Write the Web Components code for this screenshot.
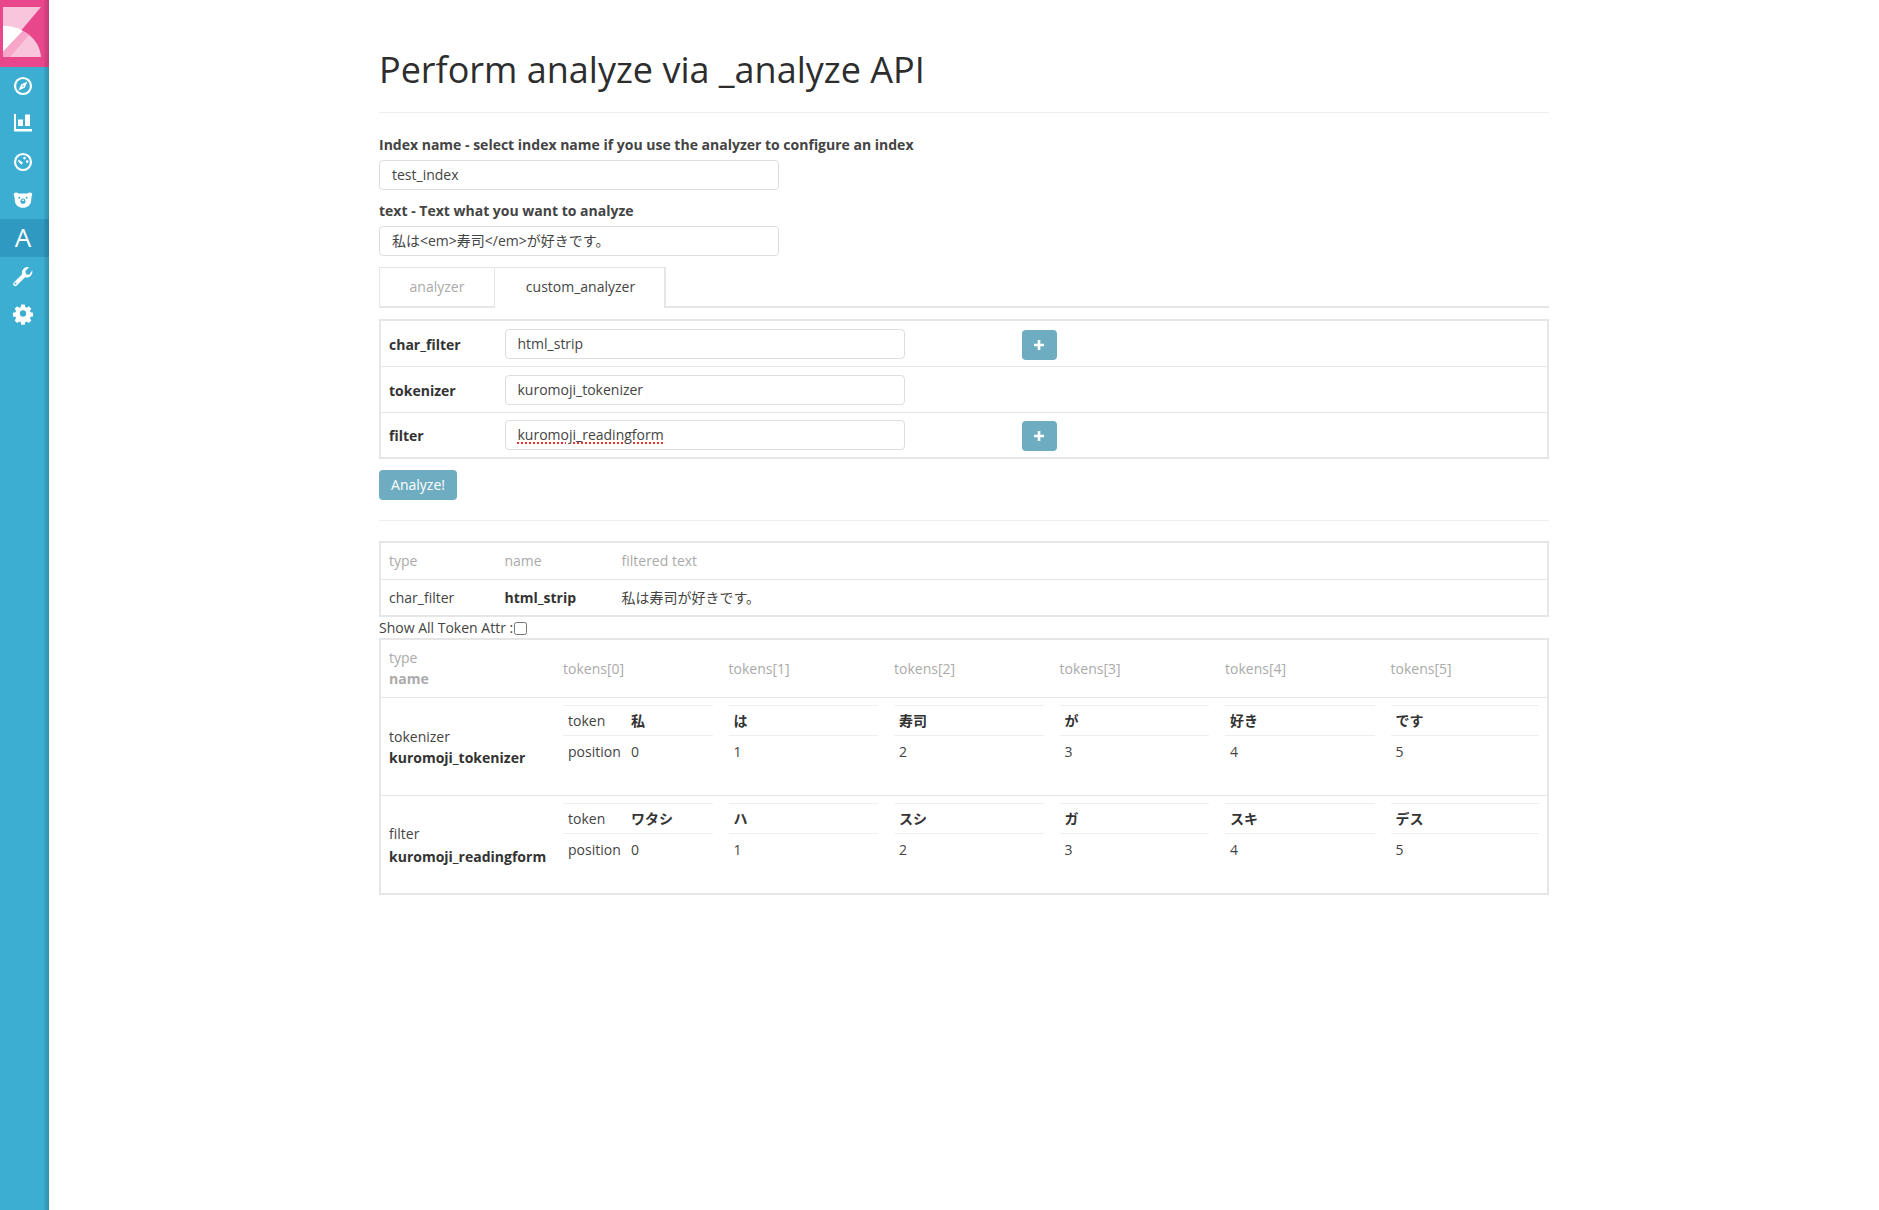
<!DOCTYPE html>
<html lang="ja">
<head>
<meta charset="utf-8">
<title>Perform analyze via _analyze API</title>
<style>
  html, body { margin: 0; height: 100%; }
  body { font: 14px/20px "Open Sans", "Noto Sans CJK JP", sans-serif; color: #444; background: #fff; }
</style>
</head>
<body>
<app-shell>
  <side-nav slot="nav"></side-nav>
  <page-header>Perform analyze via _analyze API</page-header>
  <text-field label="Index name - select index name if you use the analyzer to configure an index" value="test_index"></text-field>
  <text-field label="text - Text what you want to analyze" value="私は&lt;em&gt;寿司&lt;/em&gt;が好きです。"></text-field>
  <analyzer-tabs></analyzer-tabs>
  <analyzer-form></analyzer-form>
  <result-tables></result-tables>
</app-shell>

<script>
const FONT = '"Open Sans", "Noto Sans CJK JP", sans-serif';

class AppShell extends HTMLElement {
  connectedCallback() {
    this.attachShadow({ mode: 'open' });
    this.shadowRoot.innerHTML = `
      <style>
        :host { display: flex; min-height: 1210px; font-family: ${FONT}; }
        main { flex: 1; min-width: 0; }
        .container { width: 1170px; margin: 0 auto; }
      </style>
      <slot name="nav"></slot>
      <main><div class="container"><slot></slot></div></main>
    `;
  }
}
customElements.define('app-shell', AppShell);

const ICONS = [
  // compass
  `<circle cx="12" cy="12" r="8" fill="none" stroke="#fff" stroke-width="2.2"/><path d="M16.500 7.500l-2.800 6.200-6.200 2.800 2.800-6.200z" fill="#fff"/><circle cx="12" cy="12" r="1" fill="#9fd6e8"/>`,
  // bar chart
  `<path d="M3 2h2v15h16v2.500H3z" fill="#fff"/><path d="M7 7.500h5v6.500H7zM14 2.500h5V14h-5z" fill="#fff"/>`,
  // dashboard dial
  `<circle cx="12" cy="12" r="8" fill="none" stroke="#fff" stroke-width="2.200"/><path d="M7.500 9.500l4.500 3.300-1.600 1.900-3.400-3.400zM13.500 6.800a1.300 1.300 0 1 1 0 2.600 1.300 1.300 0 0 1 0-2.600zM16.200 10.300a1.300 1.300 0 1 1 0 2.600 1.300 1.300 0 0 1 0-2.600z" fill="#fff"/>`,
  // bear
  `<g transform="translate(0 .7)"><path d="M3.300 4.300c1.500-.9 3.200-.6 4.200.4h9c1-1 2.700-1.300 4.200-.4.700 1 .6 2.500-.2 3.700l-.4 4.500c-.3 2-1.400 4-3.400 5.300-1.400.9-3 1.200-4.700 1.200s-3.300-.3-4.700-1.200c-2-1.300-3.100-3.300-3.400-5.300L3.500 8c-.8-1.200-.9-2.700-.2-3.700z" fill="#fff"/><circle cx="8.300" cy="9" r="1" fill="#3caed2"/><circle cx="15.700" cy="9" r="1" fill="#3caed2"/><ellipse cx="12" cy="12.500" rx="2.500" ry="2.600" fill="#3caed2"/><ellipse cx="12" cy="11.600" rx="1.200" ry=".7" fill="#fff"/></g>`,
  null,
  // wrench
  `<path d="M21.200 6.200c.5 2.200-.1 4.300-1.700 5.800-1.500 1.400-3.500 1.800-5.400 1.200l-8.300 8.300c-.9.900-2.200.9-3 .1-.9-.9-.9-2.200 0-3.100l8.300-8.200c-.6-1.900-.1-3.900 1.300-5.400 1.500-1.500 3.600-2.100 5.600-1.700l-3.600 3.700.6 3.300 3.300.6zM4.500 18.500a1 1 0 1 0 0 2 1 1 0 0 0 0-2z" fill="#fff" fill-rule="evenodd"/>`,
  // gear
  `<path fill-rule="evenodd" d="M10 2h4l.5 2.800 1.700.7 2.300-1.600 2.800 2.800-1.600 2.300.7 1.700 2.800.5v4l-2.800.5-.7 1.700 1.600 2.300-2.800 2.800-2.300-1.600-1.700.7-.5 2.800h-4l-.5-2.800-1.700-.7-2.300 1.600-2.800-2.800 1.600-2.300-.7-1.700-2.800-.5v-4l2.800-.5.7-1.700-1.600-2.300 2.800-2.800 2.300 1.600 1.700-.7zM12 8.500a3.500 3.500 0 1 0 0 7 3.500 3.500 0 0 0 0-7z" fill="#fff" transform="translate(1.200 .7) scale(.9)"/>`,
];

class SideNav extends HTMLElement {
  connectedCallback() {
    this.attachShadow({ mode: 'open' });
    const items = ICONS.map((svg, i) => svg
      ? `<a class="item"><svg viewBox="0 0 24 24" width="24" height="24">${svg}</svg></a>`
      : `<a class="item active"><span>A</span></a>`).join('');
    this.shadowRoot.innerHTML = `
      <style>
        :host { display: block; width: 49px; flex: none; background: #3caed2; position: relative; }
        :host::after { content: ""; position: absolute; top: 0; right: 0; bottom: 0; width: 5px; background: linear-gradient(to right, rgba(0,0,0,.06), rgba(0,0,0,.16)); }
        .logo { height: 67px; background: #e8488b; display: flex; justify-content: center; }
        .logo svg { display: block; }
        nav { display: flex; flex-direction: column; }
        .item { height: 38px; display: flex; align-items: center; justify-content: center; color: #fff; font: 400 26px/1 "Open Sans", sans-serif; padding-right: 3px; }
        .item span { padding-bottom: 2px; }
        .active { background: #2f99c1; }
      </style>
      <div class="logo">
        <svg width="49" height="67" viewBox="0 0 49 67">
          <path d="M3 7h38L3 52z" fill="#f9c5dc"/>
          <path d="M3 26c9 0 16 2 20 5L3 52z" fill="#fff"/>
          <path d="M23 31c10 5 17 14 18 26H10z" fill="#f9c5dc"/>
          <path d="M23 31l6 4L10 57H3v-5z" fill="#f7a6c9"/>
        </svg>
      </div>
      <nav>${items}</nav>
    `;
  }
}
customElements.define('side-nav', SideNav);

class PageHeader extends HTMLElement {
  connectedCallback() {
    this.attachShadow({ mode: 'open' });
    this.shadowRoot.innerHTML = `
      <style>
        :host { display: block; padding-top: 46px; padding-bottom: 18px; margin-bottom: 22px; border-bottom: 1px solid #ecf0f1; }
        h1 { margin: 0; font: 400 36px/48px ${FONT}; color: #2d2d2d; }
      </style>
      <h1><slot></slot></h1>
    `;
  }
}
customElements.define('page-header', PageHeader);

class TextField extends HTMLElement {
  connectedCallback() {
    this.attachShadow({ mode: 'open' });
    this.shadowRoot.innerHTML = `
      <style>
        :host { display: block; margin-bottom: 11px; }
        label { display: block; font-weight: 700; line-height: 20px; margin-bottom: 5px; color: #444; }
        .input { box-sizing: border-box; width: 400px; height: 30px; line-height: 28px; padding: 0 12px; border: 1px solid #ddd; border-radius: 4px; background: #fff; color: #444; }
      </style>
      <label></label>
      <div class="input" role="textbox"></div>
    `;
    this.shadowRoot.querySelector('label').textContent = this.getAttribute('label');
    this.shadowRoot.querySelector('.input').textContent = this.getAttribute('value');
  }
}
customElements.define('text-field', TextField);

class AnalyzerTabs extends HTMLElement {
  connectedCallback() {
    this.attachShadow({ mode: 'open' });
    this.shadowRoot.innerHTML = `
      <style>
        :host { display: flex; height: 41px; box-sizing: border-box; border-bottom: 2px solid #e6e6e6; margin-bottom: 11px; }
        .tab { box-sizing: border-box; height: 41px; line-height: 38px; text-align: center; border: 1px solid #e6e6e6; border-bottom: 0; }
        .off { width: 116px; color: #aaa; border-bottom: 2px solid #e6e6e6; }
        .on { width: 171px; color: #444; background: #fff; border-left: 0; border-right: 2px solid #e6e6e6; padding-left: 2px; }
      </style>
      <div class="tab off">analyzer</div>
      <div class="tab on">custom_analyzer</div>
    `;
  }
}
customElements.define('analyzer-tabs', AnalyzerTabs);

class AnalyzerForm extends HTMLElement {
  connectedCallback() {
    this.attachShadow({ mode: 'open' });
    const plus = '<button aria-label="add"><svg width="10" height="10" viewBox="0 0 10 10"><path d="M3.700 0h2.600v3.700H10v2.600H6.300V10H3.700V6.300H0V3.700h3.700z" fill="#fff"/></svg></button>';
    const row = (name, value, add, spell) => `
      <div class="row">
        <b>${name}</b>
        <div class="input" role="textbox"><span class="${spell ? 'spell' : ''}">${value}</span></div>
        ${add ? plus : ''}
      </div>`;
    this.shadowRoot.innerHTML = `
      <style>
        :host { display: block; }
        .box { border: 2px solid #e6e6e6; }
        .row { display: grid; grid-template-columns: 115.500px 400px 117px 35px; align-items: center; height: 46px; padding-left: 8px; border-top: 1px solid #e6e6e6; box-sizing: border-box; }
        .row:first-child, .row:last-child { height: 45px; }
        .row:first-child { border-top: 0; }
        b { font-weight: 700; color: #333; padding-top: 2px; }
        .input { box-sizing: border-box; height: 30px; line-height: 28px; padding: 0 12px; border: 1px solid #ddd; border-radius: 4px; color: #444; }
        .spell { text-decoration: underline dotted #f03030 1.500px; text-underline-offset: 2px; }
        button { grid-column: 4; height: 30px; margin-top: 2px; padding: 0; border: 0; border-radius: 4px; background: #6eadc1; display: flex; align-items: center; justify-content: center; }
        .go { display: block; margin-top: 11px; width: 78px; height: 30px; font: 14px/30px ${FONT}; color: #fff; }
        hr { border: 0; border-top: 1px solid #ecf0f1; margin: 20px 0; }
      </style>
      <div class="box">
        ${row('char_filter', 'html_strip', true)}
        ${row('tokenizer', 'kuromoji_tokenizer')}
        ${row('filter', 'kuromoji_readingform', true, true)}
      </div>
      <button class="go">Analyze!</button>
      <hr>
    `;
  }
}
customElements.define('analyzer-form', AnalyzerForm);

class TokenCell extends HTMLElement {
  connectedCallback() {
    this.attachShadow({ mode: 'open' });
    const labelled = this.hasAttribute('labelled');
    this.shadowRoot.innerHTML = `
      <style>
        :host { display: block; padding: 7px 8px 0; }
        .inner { display: grid; grid-template-columns: ${labelled ? '63px 1fr' : '1fr'}; }
        .c { height: 31px; box-sizing: border-box; padding: 0 5px; line-height: 32px; }
        .t { line-height: 29px; border-top: 1px solid #ecf0f1; border-bottom: 1px solid #ecf0f1; }
        .v { font-weight: 700; color: #333; }
      </style>
      <div class="inner">
        ${labelled ? '<div class="c t">token</div>' : ''}<div class="c t v">${this.getAttribute('token')}</div>
        ${labelled ? '<div class="c">position</div>' : ''}<div class="c">${this.getAttribute('pos')}</div>
      </div>
    `;
  }
}
customElements.define('token-cell', TokenCell);

class ResultTables extends HTMLElement {
  connectedCallback() {
    this.attachShadow({ mode: 'open' });
    const toks = [
      ['私', 'は', '寿司', 'が', '好き', 'です'],
      ['ワタシ', 'ハ', 'スシ', 'ガ', 'スキ', 'デス'],
    ];
    const cells = t => t.map((s, i) => `<token-cell token="${s}" pos="${i}" ${i === 0 ? 'labelled' : ''}></token-cell>`).join('');
    this.shadowRoot.innerHTML = `
      <style>
        :host { display: block; }
        .box { border: 2px solid #e6e6e6; }
        .filtered { display: grid; grid-template-columns: 115.500px 117px 1fr; padding-left: 8px; }
        .filtered > div { height: 36px; line-height: 36px; }
        .filtered > div.short { height: 35px; }
        .filtered .line { grid-column: 1 / -1; height: 1px; background: #e6e6e6; margin-left: -8px; }
        .h { color: #aaa; }
        .chk { line-height: 20px; height: 21px; display: flex; align-items: center; }
        .chk input { margin: 2px 0 0 1px; width: 13px; height: 13px; }
        .tokens { display: grid; grid-template-columns: 174px repeat(5, 165.500px) 164.500px; }
        .head { height: 57px; display: flex; align-items: center; padding-left: 8px; }
        .head.first { display: block; padding-top: 7px; height: 50px; line-height: 21px; }
        .line { grid-column: 1 / -1; height: 1px; background: #e6e6e6; }
        .name { padding: 28px 0 0 8px; line-height: 21px; height: 69px; }
        .name.alt { padding-top: 27px; height: 70px; }
        .name.alt b { display: block; margin-top: 2px; }
        b { font-weight: 700; color: #333; }
        .h b { color: #aaa; }
      </style>
      <div class="box filtered">
        <div class="h">type</div><div class="h">name</div><div class="h">filtered text</div>
        <div class="line"></div>
        <div class="short">char_filter</div><div class="short"><b>html_strip</b></div><div class="short">私は寿司が好きです。</div>
      </div>
      <label class="chk">Show All Token Attr :<input type="checkbox"></label>
      <div class="box tokens">
        <div class="head first h">type<br><b>name</b></div>
        ${[0,1,2,3,4,5].map(i => `<div class="head h">tokens[${i}]</div>`).join('')}
        <div class="line"></div>
        <div class="name">tokenizer<br><b>kuromoji_tokenizer</b></div>
        ${cells(toks[0])}
        <div class="line"></div>
        <div class="name alt">filter<b>kuromoji_readingform</b></div>
        ${cells(toks[1])}
      </div>
    `;
  }
}
customElements.define('result-tables', ResultTables);
</script>
</body>
</html>
